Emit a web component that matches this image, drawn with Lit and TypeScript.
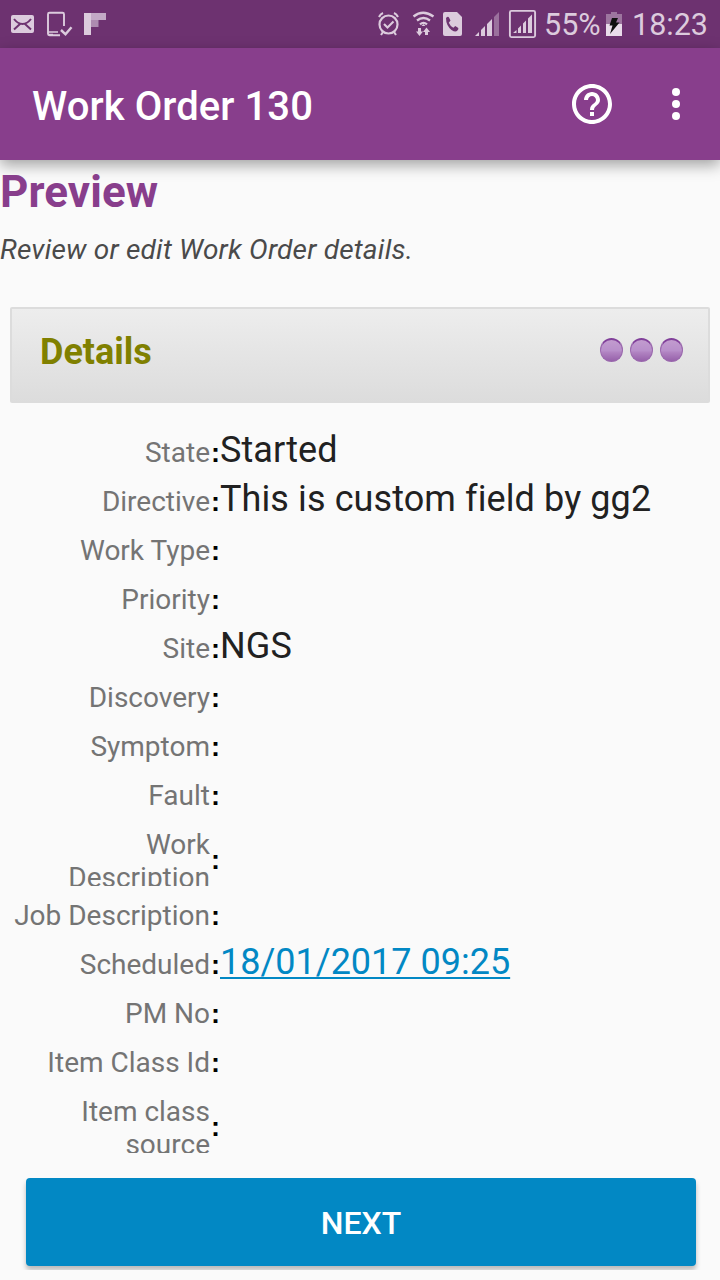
import { LitElement, html, css } from "lit";
import { customElement } from "lit/decorators.js";

interface Field {
  label: string;
  value?: string;
  link?: boolean;
  tall?: boolean;
}

const FIELDS: Field[] = [
  { label: "State", value: "Started" },
  { label: "Directive", value: "This is custom field by gg2" },
  { label: "Work Type" },
  { label: "Priority" },
  { label: "Site", value: "NGS" },
  { label: "Discovery" },
  { label: "Symptom" },
  { label: "Fault" },
  { label: "Work Description", tall: true },
  { label: "Job Description" },
  { label: "Scheduled", value: "18/01/2017 09:25", link: true },
  { label: "PM No" },
  { label: "Item Class Id" },
  { label: "Item class source", tall: true },
];

@customElement("status-bar")
class StatusBar extends LitElement {
  static styles = css`
    :host {
      display: flex;
      height: 48px;
      background: #6d3270;
      color: #dccbdd;
      font: 400 31px/48px Roboto, sans-serif;
      white-space: nowrap;
    }
    svg { display: block; flex: none; }
    span { display: block; box-sizing: border-box; font-size: 30.5px; padding-top: 1px; }
    .pct { width: 60px; padding-left: 4px; }
    .time { padding-left: 8px; }
  `;
  render() {
    return html`
      <svg width="370" height="48" viewBox="0 0 370 48" fill="none">
        <rect x="11" y="15" width="23" height="18" rx="2" fill="#dccbdd" />
        <path d="M14 19q4 5 8.500 5t8.500-5M14 29.500l6-5.500M31 29.500l-6-5.500" stroke="#6d3270" stroke-width="2" />
        <path d="M64 26V14.300q0-1.500-1.500-1.500H49.500q-1.500 0-1.500 1.500v19.400q0 1.500 1.500 1.500h10.500" stroke="#dccbdd" stroke-width="1.900" />
        <path d="M48 32h10M48 34.500h5" stroke="#dccbdd" stroke-width="1.500" />
        <path d="M61 30l4.500 4.300 6-7" stroke="#dccbdd" stroke-width="2.500" />
        <path d="M84 13h7v22h-7z" fill="#dccbdd" />
        <path d="M91 13h15v7H91z" fill="#c3a9c6" />
        <path d="M91 20h7.500v7H91z" fill="#ad8bb0" />
      </svg>
      <svg width="170" height="48" viewBox="0 0 170 48" fill="none" stroke="#dccbdd">
        <circle cx="18.500" cy="24.500" r="9" stroke-width="2.200" />
        <path d="M14 24l3.500 3.500 6-6M9 17q1.500-3 4-4M28 17q-1.500-3-4-4M13 32l-2 3M24 32l2 3" stroke-width="2.100" />
        <path d="M43.500 16.500q9.500-7.500 20 0M47 20.500q6.500-5 13 0M50 24.300q3.500-2.800 7 0" stroke-width="2.300" />
        <path d="M53.500 24l-2 2h4z" fill="#dccbdd" stroke="none" />
        <path d="M49.500 28v5M56.500 35v-5" stroke-width="3" />
        <path d="M46 31.500h7l-3.500 4.500zM53 32h7l-3.500-4.500z" fill="#dccbdd" stroke="none" />
        <path d="M75 12h12l5 5v17q0 2-2 2H75q-2 0-2-2V14q0-2 2-2z" fill="#dccbdd" stroke="none" />
        <path d="M76 18q2-2 3-.500l1.500 3-1.700 2.200q1.500 3.500 4.500 5l2-1.600 3 2q.700 1.200-1.300 3-2 1.200-5.500-1.200Q76 25.500 76 18z" fill="#6d3270" stroke="none" />
        <path d="M105 36l4-4v4zM111 30l4-4v10h-4zM117 24l5-5v17h-5z" fill="#dccbdd" stroke="none" />
        <path d="M124 17l5-5v24h-5z" fill="#9b719d" stroke="none" />
        <rect x="139.900" y="10.900" width="25.200" height="26.200" rx="1.500" stroke-width="1.900" />
        <path d="M143 33l3.500-3v3zM148 28.500l3-3V33h-3zM153 23.500l3-3V33h-3zM158 18.500l4-4V33h-4z" fill="#dccbdd" stroke="none" />
      </svg>
      <span class="pct">55%</span>
      <svg width="24" height="48" viewBox="0 0 24 48">
        <path d="M6 14h5v-2h6v2h5v10H6z" fill="#9d759f" />
        <path d="M6 24h16v12H6z" fill="#e9dcea" />
        <path d="M12 18h6l-2 4.500h3.500L10 34l2.500-8.500H9.500z" fill="#111" />
      </svg>
      <span class="time">18:23</span>
    `;
  }
}

@customElement("field-row")
class FieldRow extends LitElement {
  static properties = { field: { attribute: false } };
  declare field: Field;
  static styles = css`
    .row { display: flex; height: 49px; }
    .label {
      width: 210px; height: 33px; margin-top: 7px; flex: none; overflow: hidden;
      text-align: right; font-size: 28px; line-height: 33px; color: #747474;
    }
    .colon {
      width: 10px; flex: none; padding: 8px 0 0 1px; box-sizing: border-box;
      font: 700 27px/32px "Liberation Sans", sans-serif; color: #000;
    }
    .value { font-size: 36px; line-height: 43px; color: #212121; white-space: nowrap; letter-spacing: 0.1px; }
    .link {
      color: #0288c4; letter-spacing: 0; text-decoration: underline;
      text-decoration-thickness: 2px; text-underline-offset: 3px;
    }
    .tall { height: 71px; }
    .tall .label { height: 58px; padding-left: 40px; box-sizing: border-box; }
    .tall .colon { padding-top: 23px; }
  `;
  render() {
    const f = this.field;
    return html`<div class="row ${f.tall ? "tall" : ""}">
      <div class="label">${f.label}</div>
      <div class="colon">:</div>
      <div class="value ${f.link ? "link" : ""}">${f.value ?? ""}</div>
    </div>`;
  }
}

@customElement("app-root")
class AppRoot extends LitElement {
  static styles = css`
    :host {
      display: flex; flex-direction: column; width: 720px; height: 1280px; overflow: hidden;
      background: #fafafa; font-family: Roboto, sans-serif;
    }
    status-bar { flex: none; }
    .bar {
      display: flex; align-items: center; flex: none; height: 112px; box-sizing: border-box;
      padding: 0 0 0 32px; background: #883e8c; color: #fff;
      box-shadow: 0 5px 14px rgba(0, 0, 0, 0.36);
    }
    .title { flex: 1; font-size: 40px; font-weight: 500; line-height: 48px; padding-top: 6px; letter-spacing: 0.08px; }
    .bar svg { display: block; }
    h1 { margin: 5px 0 0; font-size: 44px; line-height: 54px; font-weight: 700; color: #883e8c; letter-spacing: 0.1px; }
    .hint { margin: 14px 0 0; font-size: 28px; line-height: 33px; font-style: italic; color: #4a4a4a; letter-spacing: 0.2px; }
    .panel {
      display: flex; align-items: center; justify-content: space-between; flex: none;
      height: 96px; margin: 41px 10px 26px; padding: 0 25px 7px 28px; box-sizing: border-box;
      border: 2px solid #dcdcdc; border-bottom-width: 1px; border-radius: 2px;
      background: linear-gradient(#ededed, #dcdcdc);
    }
    .panel h2 { margin: 0; font-size: 36px; line-height: 42px; color: #808000; }
    .dots { display: flex; gap: 7px; padding-bottom: 5px; }
    .dot {
      width: 23px; height: 24px; border-radius: 50%; box-sizing: border-box;
      border: 1px solid #9a68ad; border-top: 2px solid #81409a;
      background: linear-gradient(#c29ccf 0%, #b88fca 50%, #b082c1 60%, #9661aa 100%);
    }
    .foot { height: 92px; margin: 19px 0 0; padding: 0 24px 0 26px; overflow: hidden; flex: none; }
    .next {
      display: block; width: 670px; height: 88px; padding: 1px 0 0; border: 0; border-radius: 4px;
      background: #0288c4; color: #fff; font: 500 32px/38px Roboto, sans-serif;
      box-shadow: 0 4px 5px rgba(0, 0, 0, 0.26);
    }
  `;
  render() {
    return html`
      <status-bar></status-bar>
      <header class="bar">
        <div class="title">Work Order 130</div>
        <svg width="148" height="48" viewBox="0 0 148 48" fill="#fff">
          <path d="M18 36h4v-4h-4v4zm2-32C8.950 4 0 12.950 0 24s8.950 20 20 20 20-8.950 20-20S31.050 4 20 4zm0 36c-8.820 0-16-7.180-16-16S11.180 8 20 8s16 7.180 16 16-7.180 16-16 16zm0-28c-4.420 0-8 3.580-8 8h4c0-2.210 1.790-4 4-4s4 1.790 4 4c0 4-6 3.500-6 10h4c0-4.500 6-5 6-10 0-4.420-3.580-8-8-8z" />
          <circle cx="104" cy="12" r="4" /><circle cx="104" cy="24" r="4" /><circle cx="104" cy="36" r="4" />
        </svg>
      </header>
      <h1>Preview</h1>
      <p class="hint">Review or edit Work Order details.</p>
      <section class="panel">
        <h2>Details</h2>
        <div class="dots"><i class="dot"></i><i class="dot"></i><i class="dot"></i></div>
      </section>
      <main>${FIELDS.map((f) => html`<field-row .field=${f}></field-row>`)}</main>
      <div class="foot"><button class="next">NEXT</button></div>
    `;
  }
}
